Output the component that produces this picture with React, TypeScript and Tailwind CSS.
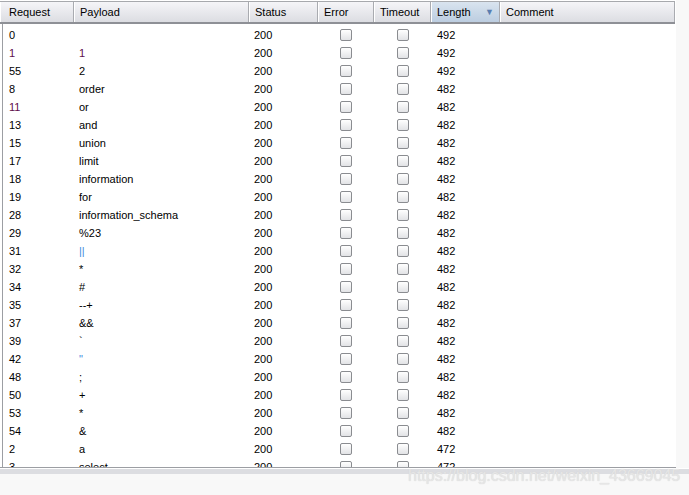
import React from 'react';

interface Row {
  req: string;
  payload: string;
  status: number;
  length: number;
  tint?: 'purple' | 'blue';
  reqTint?: boolean;
}

const rows: Row[] = [
  { req: '0', payload: '', status: 200, length: 492 },
  { req: '1', payload: '1', status: 200, length: 492, tint: 'purple', reqTint: true },
  { req: '55', payload: '2', status: 200, length: 492 },
  { req: '8', payload: 'order', status: 200, length: 482 },
  { req: '11', payload: 'or', status: 200, length: 482, reqTint: true },
  { req: '13', payload: 'and', status: 200, length: 482 },
  { req: '15', payload: 'union', status: 200, length: 482 },
  { req: '17', payload: 'limit', status: 200, length: 482 },
  { req: '18', payload: 'information', status: 200, length: 482 },
  { req: '19', payload: 'for', status: 200, length: 482 },
  { req: '28', payload: 'information_schema', status: 200, length: 482 },
  { req: '29', payload: '%23', status: 200, length: 482 },
  { req: '31', payload: '||', status: 200, length: 482, tint: 'blue' },
  { req: '32', payload: '*', status: 200, length: 482 },
  { req: '34', payload: '#', status: 200, length: 482 },
  { req: '35', payload: '--+', status: 200, length: 482 },
  { req: '37', payload: '&&', status: 200, length: 482 },
  { req: '39', payload: '`', status: 200, length: 482 },
  { req: '42', payload: '"', status: 200, length: 482, tint: 'blue' },
  { req: '48', payload: ';', status: 200, length: 482 },
  { req: '50', payload: '+', status: 200, length: 482 },
  { req: '53', payload: '*', status: 200, length: 482 },
  { req: '54', payload: '&', status: 200, length: 482 },
  { req: '2', payload: 'a', status: 200, length: 472 },
  { req: '3', payload: 'select', status: 200, length: 472 },
];

const Checkbox = () => (
  <div className="w-[12px] h-[12px] rounded-[2px] border border-[#8a8c90] bg-gradient-to-b from-[#ffffff] to-[#e2e3e6]" />
);

const HeaderCell = ({ label, width, active }: { label: string; width: string; active?: boolean }) => (
  <div
    className={`${width} h-full flex items-center justify-between pl-[6px] pr-[5px] border-r border-[#a9abb0] shadow-[inset_1px_0_0_#ffffff] ${
      active ? 'bg-gradient-to-b from-[#d9e4ef] to-[#bccde0]' : ''
    }`}
  >
    <span>{label}</span>
    {active && <span className="text-[#5a7eb0] text-[9px] leading-none">▼</span>}
  </div>
);

export default function App() {
  return (
    <div className="relative w-[689px] h-[495px] bg-[#f8f8f8] overflow-hidden font-['Liberation_Sans',Arial,sans-serif] text-[11px] text-black">
      <div className="flex flex-col h-[468px] bg-white mr-[13px] border-b border-[#9c9ea3]">
        {/* Header */}
        <div className="mt-[1px] w-[675px] h-[23px] flex border-t border-[#a7a9ad] border-b-2 border-b-[#8e9096] bg-gradient-to-b from-[#f5f5f8] to-[#dcdde2]">
          <HeaderCell label="Request" width="w-[74px] pl-[9px]" />
          <HeaderCell label="Payload" width="w-[175px]" />
          <HeaderCell label="Status" width="w-[69px]" />
          <HeaderCell label="Error" width="w-[56px]" />
          <HeaderCell label="Timeout" width="w-[57px]" />
          <HeaderCell label="Length" width="w-[69px]" active />
          <HeaderCell label="Comment" width="w-[175px]" />
        </div>

        {/* Body */}
        <div className="flex-1 overflow-hidden ml-[2px] pt-[2px] border-l border-[#9c9ea3]">
          {rows.map((r, i) => (
            <div key={i} className="flex h-[18px] items-center">
              <div className={`w-[71px] pl-[6px] ${r.reqTint ? 'text-[#5e0d4c]' : ''}`}>{r.req}</div>
              <div
                className={`w-[175px] pl-[5px] ${
                  r.tint === 'purple' ? 'text-[#5e0d4c]' : r.tint === 'blue' ? 'text-[#3f8be0]' : ''
                }`}
              >
                {r.payload}
              </div>
              <div className="w-[69px] pl-[5px]">{r.status}</div>
              <div className="w-[56px] flex justify-center">
                <Checkbox />
              </div>
              <div className="w-[57px] flex justify-center">
                <Checkbox />
              </div>
              <div className="w-[69px] pl-[6px]">{r.length}</div>
              <div className="w-[175px]" />
            </div>
          ))}
        </div>
      </div>
      <div className="h-[1px] bg-white" />
      <div className="h-[5px] bg-[#dcdde1]" />

      {/* watermark */}
      <div className="absolute left-[408px] top-[466px] text-[16px] leading-[20px] text-[#e6e6e6] [text-shadow:0_0_1px_#d0d0d0]">
        https://blog.csdn.net/weixin_43669045
      </div>
    </div>
  );
}
